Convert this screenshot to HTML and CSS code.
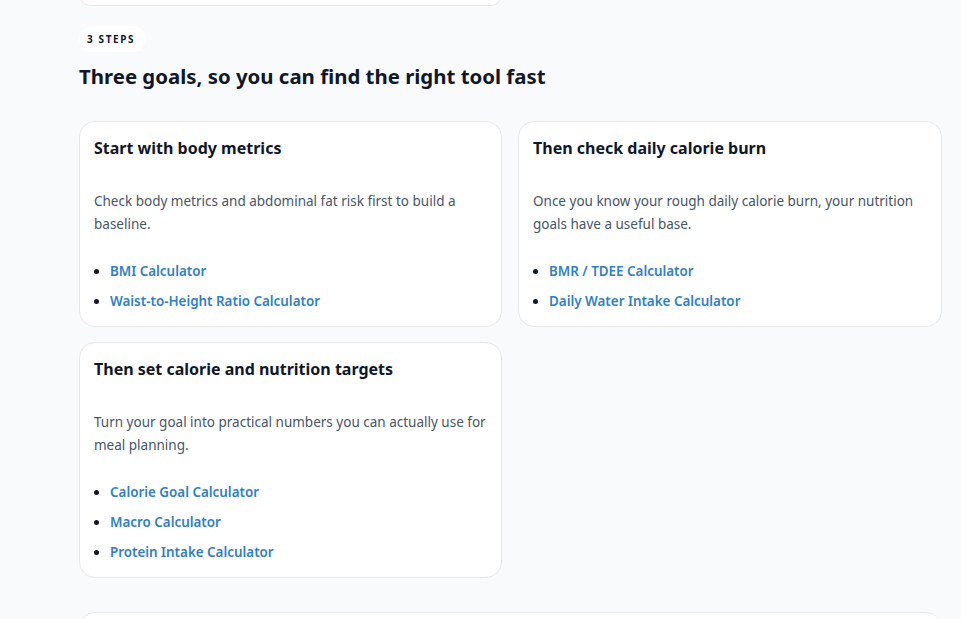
FILE: index.html
```html
<!DOCTYPE html>
<html lang="en">
<head>
<meta charset="utf-8">
<title>Three goals</title>
<link rel="stylesheet" href="styles.css">
</head>
<body>
<div class="page">
  <div class="prev-card"></div>
  <section class="steps">
    <span class="pill">3 STEPS</span>
    <h2 class="heading">Three goals, so you can find the right tool fast</h2>
    <div class="grid">
      <article class="card">
        <h3 class="card-title">Start with body metrics</h3>
        <p class="card-text">Check body metrics and abdominal fat risk first to build a baseline.</p>
        <ul class="links">
          <li><a href="#">BMI Calculator</a></li>
          <li><a href="#">Waist-to-Height Ratio Calculator</a></li>
        </ul>
      </article>
      <article class="card">
        <h3 class="card-title">Then check daily calorie burn</h3>
        <p class="card-text">Once you know your rough daily calorie burn, your nutrition goals have a useful base.</p>
        <ul class="links">
          <li><a href="#">BMR / TDEE Calculator</a></li>
          <li><a href="#">Daily Water Intake Calculator</a></li>
        </ul>
      </article>
      <article class="card">
        <h3 class="card-title">Then set calorie and nutrition targets</h3>
        <p class="card-text">Turn your goal into practical numbers you can actually use for meal planning.</p>
        <ul class="links">
          <li><a href="#">Calorie Goal Calculator</a></li>
          <li><a href="#">Macro Calculator</a></li>
          <li><a href="#">Protein Intake Calculator</a></li>
        </ul>
      </article>
    </div>
  </section>
  <div class="next-card"></div>
</div>
</body>
</html>
```
FILE: styles.css
```css
* { box-sizing: border-box; }
html, body { margin: 0; padding: 0; }
body {
  background: #f8fafc;
  font-family: "Noto Sans", "Open Sans", sans-serif;
  color: #0f172a;
  overflow: hidden;
  height: 619px;
}
.page {
  padding: 0 19px 0 79px;
}
.prev-card {
  width: 423px;
  height: 22px;
  margin-top: -16px;
  background: #fff;
  border: 1px solid #e5e7eb;
  border-radius: 16px;
}
.steps {
  padding-top: 20px;
}
.pill {
  display: inline-block;
  background: #fff;
  border-radius: 999px;
  padding: 6px 11px 6px 8px;
  font-size: 10px;
  font-weight: 700;
  letter-spacing: 1.6px;
  line-height: 14px;
  color: #0f172a;
}
.heading {
  margin: 9px 0 0;
  font-size: 20.4px;
  line-height: 30px;
  font-weight: 700;
  color: #0f172a;
}
.grid {
  margin-top: 30px;
  display: grid;
  grid-template-columns: 423px 424px;
  column-gap: 16px;
  row-gap: 15px;
}
.card {
  background: #fff;
  border: 1px solid #e5e7eb;
  border-radius: 16px;
  padding: 14px 14px 5px;
}
.card-title {
  margin: 0;
  font-size: 16px;
  line-height: 24px;
  font-weight: 700;
  color: #0f172a;
}
.card-text {
  margin: 30px 0 0;
  font-size: 13.5px;
  line-height: 23px;
  color: #475569;
}
.links {
  margin: 25px 0 0;
  padding-left: 16px;
  list-style: disc;
}
.links li {
  font-size: 13.4px;
  line-height: 20px;
  margin-bottom: 10px;
  color: #0f172a;
}
.links a {
  color: #2f80c4;
  font-weight: 600;
  text-decoration: none;
}
.next-card {
  margin-top: 34px;
  height: 40px;
  background: #fff;
  border: 1px solid #e5e7eb;
  border-radius: 16px;
}
```
